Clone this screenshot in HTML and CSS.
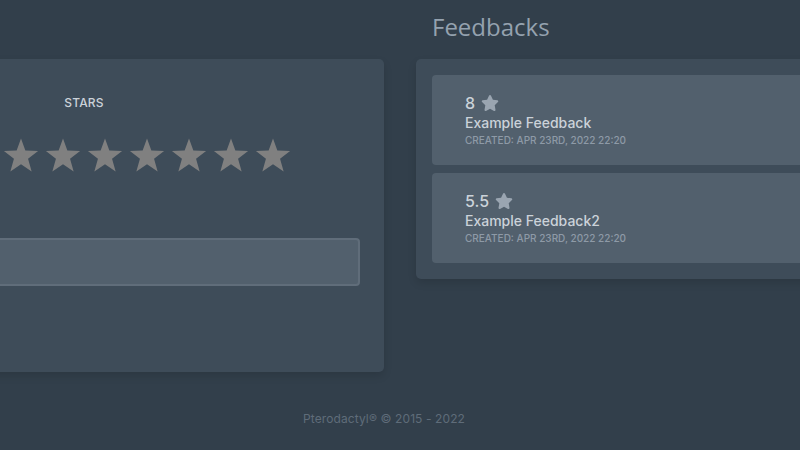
FILE: index.html
```html
<!DOCTYPE html>
<html lang="en">
<head>
<meta charset="utf-8">
<title>Feedbacks</title>
<link rel="stylesheet" href="styles.css">
</head>
<body>
<div class="layout">
  <section class="col">
    <div class="panel form-panel">
      <div class="label">Stars</div>
      <div class="stars">
        <svg class="bigstar" viewBox="0 0 24 24"><polygon points="12,0.4 14.9,8.3 23.4,8.6 16.7,13.9 19.1,22.4 12,17.5 4.9,22.4 7.3,13.9 0.6,8.6 9.1,8.3"/></svg>
        <svg class="bigstar" viewBox="0 0 24 24"><polygon points="12,0.4 14.9,8.3 23.4,8.6 16.7,13.9 19.1,22.4 12,17.5 4.9,22.4 7.3,13.9 0.6,8.6 9.1,8.3"/></svg>
        <svg class="bigstar" viewBox="0 0 24 24"><polygon points="12,0.4 14.9,8.3 23.4,8.6 16.7,13.9 19.1,22.4 12,17.5 4.9,22.4 7.3,13.9 0.6,8.6 9.1,8.3"/></svg>
        <svg class="bigstar" viewBox="0 0 24 24"><polygon points="12,0.4 14.9,8.3 23.4,8.6 16.7,13.9 19.1,22.4 12,17.5 4.9,22.4 7.3,13.9 0.6,8.6 9.1,8.3"/></svg>
        <svg class="bigstar" viewBox="0 0 24 24"><polygon points="12,0.4 14.9,8.3 23.4,8.6 16.7,13.9 19.1,22.4 12,17.5 4.9,22.4 7.3,13.9 0.6,8.6 9.1,8.3"/></svg>
        <svg class="bigstar" viewBox="0 0 24 24"><polygon points="12,0.4 14.9,8.3 23.4,8.6 16.7,13.9 19.1,22.4 12,17.5 4.9,22.4 7.3,13.9 0.6,8.6 9.1,8.3"/></svg>
        <svg class="bigstar" viewBox="0 0 24 24"><polygon points="12,0.4 14.9,8.3 23.4,8.6 16.7,13.9 19.1,22.4 12,17.5 4.9,22.4 7.3,13.9 0.6,8.6 9.1,8.3"/></svg>
        <svg class="bigstar" viewBox="0 0 24 24"><polygon points="12,0.4 14.9,8.3 23.4,8.6 16.7,13.9 19.1,22.4 12,17.5 4.9,22.4 7.3,13.9 0.6,8.6 9.1,8.3"/></svg>
        <svg class="bigstar" viewBox="0 0 24 24"><polygon points="12,0.4 14.9,8.3 23.4,8.6 16.7,13.9 19.1,22.4 12,17.5 4.9,22.4 7.3,13.9 0.6,8.6 9.1,8.3"/></svg>
        <svg class="bigstar" viewBox="0 0 24 24"><polygon points="12,0.4 14.9,8.3 23.4,8.6 16.7,13.9 19.1,22.4 12,17.5 4.9,22.4 7.3,13.9 0.6,8.6 9.1,8.3"/></svg>
      </div>
      <input class="field" type="text" aria-label="Feedback">
    </div>
  </section>
  <section class="col">
    <h2 class="title">Feedbacks</h2>
    <div class="panel list-panel">
      <div class="card">
        <div class="rating">8 <svg class="smallstar" viewBox="0 0 576 512"><path d="M316.9 18C311.6 7 300.4 0 288.1 0s-23.4 7-28.8 18L195 150.3 51.4 171.5c-12 1.8-22 10.2-25.7 21.7s-.7 24.2 7.9 32.7L137.8 329 113.2 474.7c-2 12 3 24.2 12.9 31.3s23 8 33.8 2.3l128.3-68.5 128.3 68.5c10.8 5.7 23.9 4.9 33.8-2.3s14.9-19.3 12.9-31.3L438.5 329 542.7 225.9c8.6-8.5 11.7-21.2 7.9-32.7s-13.7-19.9-25.7-21.7L381.2 150.3 316.9 18z"/></svg></div>
        <div class="name">Example Feedback</div>
        <div class="meta">Created: Apr 23rd, 2022 22:20</div>
      </div>
      <div class="card">
        <div class="rating">5.5 <svg class="smallstar" viewBox="0 0 576 512"><path d="M316.9 18C311.6 7 300.4 0 288.1 0s-23.4 7-28.8 18L195 150.3 51.4 171.5c-12 1.8-22 10.2-25.7 21.7s-.7 24.2 7.9 32.7L137.8 329 113.2 474.7c-2 12 3 24.2 12.9 31.3s23 8 33.8 2.3l128.3-68.5 128.3 68.5c10.8 5.7 23.9 4.9 33.8-2.3s14.9-19.3 12.9-31.3L438.5 329 542.7 225.9c8.6-8.5 11.7-21.2 7.9-32.7s-13.7-19.9-25.7-21.7L381.2 150.3 316.9 18z"/></svg></div>
        <div class="name">Example Feedback2</div>
        <div class="meta">Created: Apr 23rd, 2022 22:20</div>
      </div>
    </div>
  </section>
</div>
<footer class="footer">Pterodactyl® © 2015 - 2022</footer>
</body>
</html>
```
FILE: styles.css
```css
html, body {
  margin: 0;
  padding: 0;
}
body {
  background: #323f4b;
  font-family: Inter, "Open Sans", sans-serif;
  width: 800px;
  height: 450px;
  overflow: hidden;
}
.layout {
  display: grid;
  grid-template-columns: 600px 600px;
  column-gap: 32px;
  align-items: start;
  margin-left: -216px;
  width: 1232px;
  padding-top: 11px;
}
.col {
  display: flex;
  flex-direction: column;
}
.panel {
  background: #3e4c59;
  border-radius: 5px;
  box-shadow: 0 4px 8px rgba(0, 0, 0, 0.12);
}
.form-panel {
  margin-top: 48px;
  padding: 36px 24px 86px;
  display: flex;
  flex-direction: column;
  align-items: center;
}
.label {
  font-size: 12px;
  line-height: 16px;
  text-transform: uppercase;
  color: #cbd2d9;
  font-weight: 500;
  letter-spacing: 0.2px;
}
.stars {
  display: flex;
  gap: 6px;
  margin-top: 27px;
}
.bigstar {
  width: 36px;
  height: 36px;
  fill: #808080;
}
.field {
  box-sizing: border-box;
  width: 100%;
  height: 48px;
  margin-top: 64px;
  background: #52606d;
  border: 2px solid #606d7a;
  border-radius: 4px;
  outline: none;
}
.title {
  margin: 0 0 16px;
  padding-left: 16px;
  font-family: "Open Sans", sans-serif;
  font-weight: 500;
  font-size: 24px;
  line-height: 32px;
  color: #95a2af;
}
.list-panel {
  padding: 16px;
  display: flex;
  flex-direction: column;
  gap: 8px;
}
.card {
  background: #52606d;
  border-radius: 4px;
  padding: 18px 32px 18px 33px;
  display: flex;
  flex-direction: column;
}
.rating {
  display: flex;
  align-items: center;
  gap: 6px;
  font-size: 16px;
  line-height: 20px;
  font-weight: 500;
  color: #cbd2d9;
}
.smallstar {
  width: 18px;
  height: 16px;
  fill: #9aa5b1;
}
.name {
  font-size: 14px;
  line-height: 20px;
  font-weight: 500;
  color: #cbd2d9;
}
.meta {
  font-size: 10px;
  line-height: 14px;
  font-weight: 500;
  text-transform: uppercase;
  color: #8e9aa7;
}
.footer {
  margin-top: 39px;
  width: 768px;
  text-align: center;
  font-size: 12px;
  line-height: 16px;
  letter-spacing: 0.1px;
  color: #5f6c79;
}
```
